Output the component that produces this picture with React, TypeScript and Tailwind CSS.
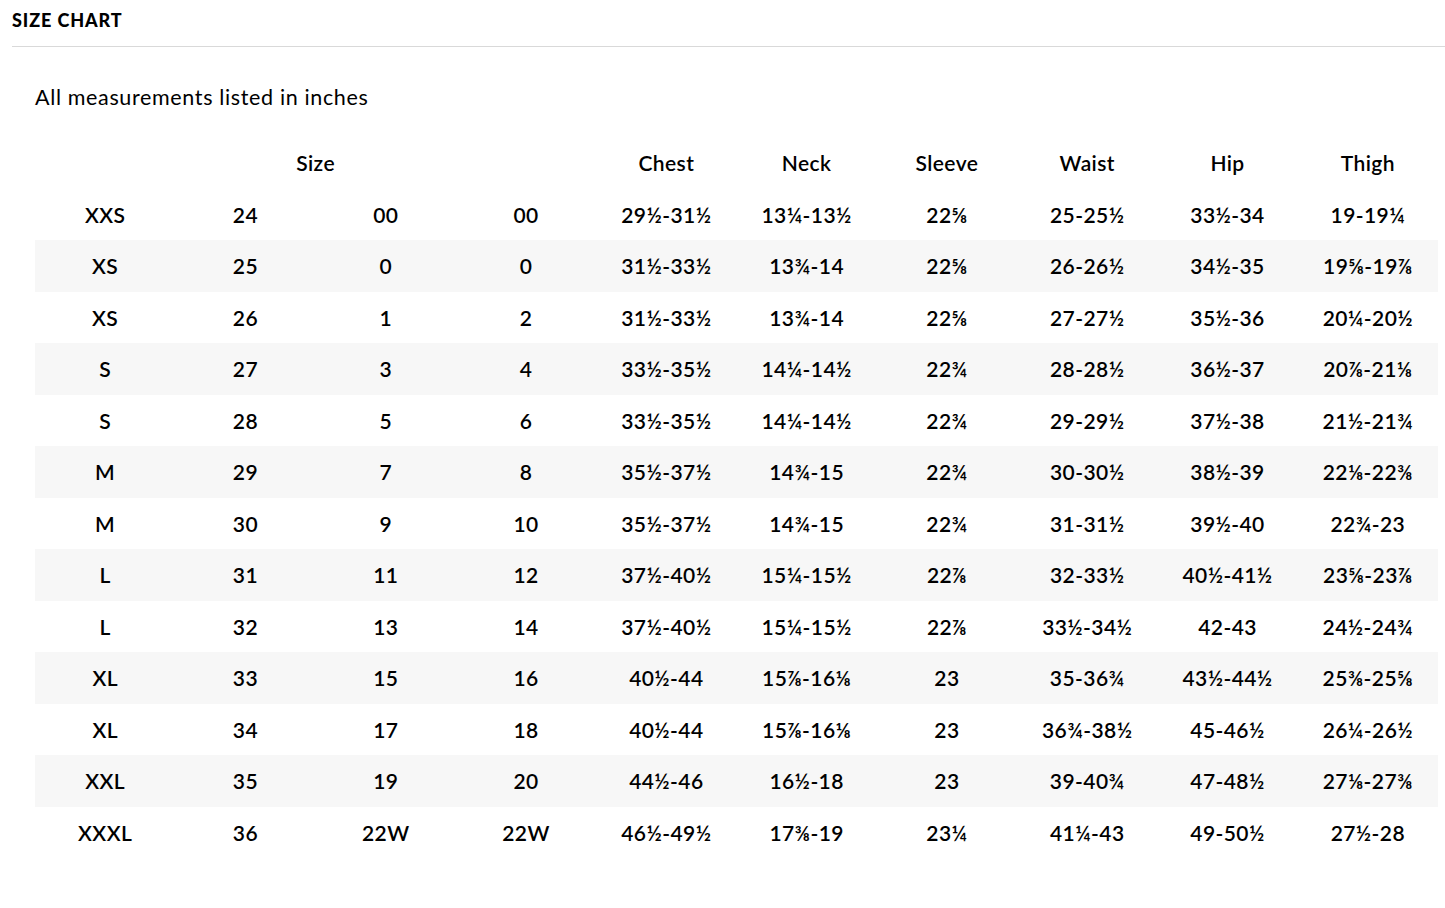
const rows: string[][] = [
  ['XXS', '24', '00', '00', '29½-31½', '13¼-13½', '22⅝', '25-25½', '33½-34', '19-19¼'],
  ['XS', '25', '0', '0', '31½-33½', '13¾-14', '22⅝', '26-26½', '34½-35', '19⅝-19⅞'],
  ['XS', '26', '1', '2', '31½-33½', '13¾-14', '22⅝', '27-27½', '35½-36', '20¼-20½'],
  ['S', '27', '3', '4', '33½-35½', '14¼-14½', '22¾', '28-28½', '36½-37', '20⅞-21⅛'],
  ['S', '28', '5', '6', '33½-35½', '14¼-14½', '22¾', '29-29½', '37½-38', '21½-21¾'],
  ['M', '29', '7', '8', '35½-37½', '14¾-15', '22¾', '30-30½', '38½-39', '22⅛-22⅜'],
  ['M', '30', '9', '10', '35½-37½', '14¾-15', '22¾', '31-31½', '39½-40', '22¾-23'],
  ['L', '31', '11', '12', '37½-40½', '15¼-15½', '22⅞', '32-33½', '40½-41½', '23⅝-23⅞'],
  ['L', '32', '13', '14', '37½-40½', '15¼-15½', '22⅞', '33½-34½', '42-43', '24½-24¾'],
  ['XL', '33', '15', '16', '40½-44', '15⅞-16⅛', '23', '35-36¾', '43½-44½', '25⅜-25⅝'],
  ['XL', '34', '17', '18', '40½-44', '15⅞-16⅛', '23', '36¾-38½', '45-46½', '26¼-26½'],
  ['XXL', '35', '19', '20', '44½-46', '16½-18', '23', '39-40¾', '47-48½', '27⅛-27⅜'],
  ['XXXL', '36', '22W', '22W', '46½-49½', '17⅜-19', '23¼', '41¼-43', '49-50½', '27½-28'],
];

const measures = ['Chest', 'Neck', 'Sleeve', 'Waist', 'Hip', 'Thigh'];

export default function App() {
  return (
    <div className="min-h-[908px] bg-white text-black font-['Lato','Liberation_Sans',sans-serif]">
      <div className="ml-[12px] flex h-[47px] items-center border-b border-[#d9d9d9] pb-[6px]">
        <h2 className="text-[18px] font-black uppercase leading-none tracking-[0.05em]">Size Chart</h2>
      </div>

      <div className="px-[35px]">
        <p className="mt-[37px] text-[21.5px] leading-[26px] tracking-[0.03em]">All measurements listed in inches</p>

        <table className="mt-[27px] w-[1403px] table-fixed border-collapse text-center text-[21px] tracking-[0.02em]">
          <thead>
            <tr className="h-[51.5px]">
              <th colSpan={4} className="font-semibold">Size</th>
              {measures.map((m) => (
                <th key={m} className="font-semibold">{m}</th>
              ))}
            </tr>
          </thead>
          <tbody>
            {rows.map((r, i) => (
              <tr key={i} className={i % 2 === 1 ? 'h-[51.5px] bg-[#f7f7f7]' : 'h-[51.5px]'}>
                {r.map((c, j) => (
                  <td key={j} className="font-semibold">{c}</td>
                ))}
              </tr>
            ))}
          </tbody>
        </table>
      </div>
    </div>
  );
}
